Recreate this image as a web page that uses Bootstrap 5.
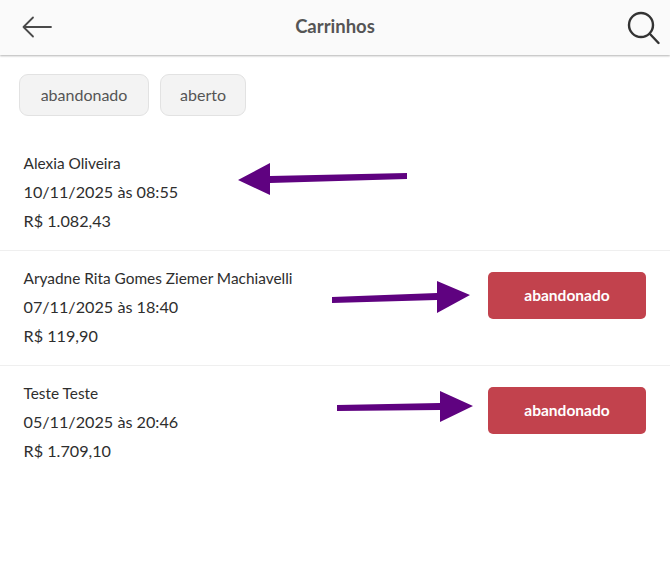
<!DOCTYPE html>
<html lang="pt-BR">
<head>
  <meta charset="UTF-8">
  <meta name="viewport" content="width=device-width, initial-scale=1">
  <title>Carrinhos</title>
  <link href="https://cdn.jsdelivr.net/npm/bootstrap@5.3.0/dist/css/bootstrap.min.css" rel="stylesheet">
  <style>
    body {
      background: #fff;
      font-family: "Lato", "Liberation Sans", sans-serif;
      color: #2e2e2e;
      position: relative;
      height: 576px;
      overflow: hidden;
    }
    .top-bar {
      height: 55px;
      background: #fafafa;
      box-shadow: 0 1px 2px rgba(0,0,0,.3);
      padding: 0 10px 0 22px;
    }
    .top-side { flex: 1 1 0; }
    .top-title {
      font-size: 18.5px;
      font-weight: 700;
      color: #555;
      margin: -2px 12px 0 0;
    }
    .filter-row {
      padding: 19px 19px 20px;
      gap: 11px;
    }
    .filter-chip {
      height: 42px;
      background: #f3f3f3;
      border: 1px solid #e2e2e2;
      border-radius: 9px;
      color: #555;
      font-size: 16px;
      padding: 0;
    }
    .chip-a { width: 130px; }
    .chip-b { width: 86px; }
    .cart-row {
      height: 115px;
      padding: 13px 24px 0 23.5px;
      border-bottom: 1px solid #efefef;
    }
    .cart-row:last-child { border-bottom: 0; }
    .cart-line {
      font-size: 16.2px;
      line-height: 29px;
      white-space: nowrap;
    }
    .cart-name { font-size: 15.4px; line-height: 28px; }
    .status-btn {
      width: 158px;
      height: 47px;
      background: #c2424d;
      border: 0;
      border-radius: 5px;
      color: #fff;
      font-size: 15.5px;
      font-weight: 700;
      padding: 0;
      margin-top: 8px;
    }
    .arrows {
      position: absolute;
      left: 0;
      top: 0;
      pointer-events: none;
    }
  </style>
</head>
<body>
  <div class="top-bar d-flex align-items-center">
    <div class="top-side d-flex">
      <svg width="30" height="24" viewBox="0 0 30 24" fill="none" stroke="#4a4a4a" stroke-width="1.8" stroke-linecap="round" stroke-linejoin="round">
        <path d="M29 11H1.500M11 1.500 1.500 11l9.500 9.500"/>
      </svg>
    </div>
    <span class="top-title">Carrinhos</span>
    <div class="top-side d-flex justify-content-end">
      <svg width="34" height="34" viewBox="0 0 34 34" fill="none" stroke="#333" stroke-width="2.4" stroke-linecap="round">
        <circle cx="15" cy="14" r="12"/>
        <path d="M24 23l8.500 9"/>
      </svg>
    </div>
  </div>

  <div class="filter-row d-flex">
    <button type="button" class="btn filter-chip chip-a">abandonado</button>
    <button type="button" class="btn filter-chip chip-b">aberto</button>
  </div>

  <div class="cart-list">
    <div class="cart-row d-flex justify-content-between align-items-start">
      <div>
        <div class="cart-line cart-name">Alexia Oliveira</div>
        <div class="cart-line">10/11/2025 às 08:55</div>
        <div class="cart-line">R$ 1.082,43</div>
      </div>
    </div>
    <div class="cart-row d-flex justify-content-between align-items-start">
      <div>
        <div class="cart-line cart-name">Aryadne Rita Gomes Ziemer Machiavelli</div>
        <div class="cart-line">07/11/2025 às 18:40</div>
        <div class="cart-line">R$ 119,90</div>
      </div>
      <button type="button" class="btn status-btn">abandonado</button>
    </div>
    <div class="cart-row d-flex justify-content-between align-items-start">
      <div>
        <div class="cart-line cart-name">Teste Teste</div>
        <div class="cart-line">05/11/2025 às 20:46</div>
        <div class="cart-line">R$ 1.709,10</div>
      </div>
      <button type="button" class="btn status-btn">abandonado</button>
    </div>
  </div>

  <!-- setas de anotação por cima da tela -->
  <svg class="arrows" width="670" height="576" viewBox="0 0 670 576" fill="#5f0280">
    <path d="M238 180 270 163 270 176 407 173 407 179 270 183 270 195Z"/>
    <path d="M470 295 437 281 437 293 332 297 332 303 437 300 437 313Z"/>
    <path d="M473 406 440 391 440 403 337 405 337 411 440 410 440 422Z"/>
  </svg>

  <script src="https://cdn.jsdelivr.net/npm/bootstrap@5.3.0/dist/js/bootstrap.bundle.min.js"></script>
</body>
</html>
